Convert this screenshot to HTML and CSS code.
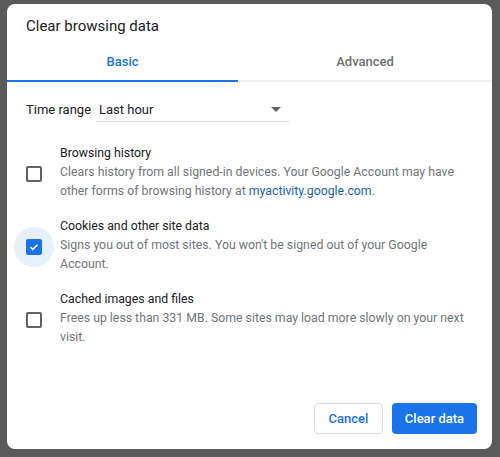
FILE: index.html
```html
<!DOCTYPE html>
<html>
<head>
    <title>Clear browsing data</title>
    <link rel="stylesheet" href="styles.css">
</head>
<body>
    <div class="dialog">
        <div class="title">Clear browsing data</div>

        <div class="tabs">
            <div class="tab active">Basic</div>
            <div class="tab">Advanced</div>
        </div>

        <div class="content">
            <div class="range-row">
                <span class="range-label">Time range</span>
                <div class="select">
                    <span>Last hour</span>
                    <svg class="arrow" width="10" height="5" viewBox="0 0 10 5"><path d="M0 0h10L5 5z" fill="#5f6368"/></svg>
                </div>
            </div>

            <div class="option">
                <div class="check"><span class="box"></span></div>
                <div class="text">
                    <div class="label">Browsing history</div>
                    <div class="desc">Clears history from all signed-in devices. Your Google Account may have other forms of browsing history at <a href="#">myactivity.google.com</a>.</div>
                </div>
            </div>

            <div class="option">
                <div class="check checked">
                    <span class="box">
                        <svg width="14" height="14" viewBox="0 0 14 14"><path d="M3 7.2l2.6 2.6L11 4.4" fill="none" stroke="#fff" stroke-width="1.8"/></svg>
                    </span>
                </div>
                <div class="text">
                    <div class="label">Cookies and other site data</div>
                    <div class="desc">Signs you out of most sites. You won't be signed out of your Google Account.</div>
                </div>
            </div>

            <div class="option">
                <div class="check"><span class="box"></span></div>
                <div class="text">
                    <div class="label">Cached images and files</div>
                    <div class="desc">Frees up less than 331 MB. Some sites may load more slowly on your next visit.</div>
                </div>
            </div>
        </div>

        <div class="footer">
            <button class="btn cancel">Cancel</button>
            <button class="btn primary">Clear data</button>
        </div>
    </div>
</body>
</html>
```

FILE: styles.css
```css
body {
    margin: 0;
    background: #5a5a5a;
    font-family: Roboto, "Liberation Sans", sans-serif;
    height: 457px;
    overflow: hidden;
}
.dialog {
    margin: 4px 8px 0 7px;
    height: 445px;
    background: #fff;
    border-radius: 8px;
    display: flex;
    flex-direction: column;
}
.title {
    padding: 13px 0 0 19px;
    height: 27px;
    font-size: 15px;
    color: #202124;
}
.tabs {
    display: flex;
    margin-top: 6px;
    border-bottom: 2px solid #eeeeee;
}
.tab {
    flex: 1;
    text-align: center;
    font-size: 13px;
    font-weight: 500;
    color: #6d6f73;
    height: 30px;
    line-height: 24px;
}
.tab.active {
    color: #1a73e8;
    border-bottom: 2px solid #1a73e8;
    margin-bottom: -2px;
    flex: 0 0 231px;
}
.content {
    flex: 1;
    padding: 0 0 0 19px;
}
.range-row {
    display: flex;
    align-items: center;
    margin-top: 15px;
    font-size: 13px;
    color: #202124;
}
.range-label {
    width: 70px;
}
.select {
    width: 182px;
    display: flex;
    justify-content: space-between;
    align-items: center;
    padding: 0 8px 0 3px;
    height: 24px;
    border-bottom: 1px solid #dadce0;
}
.option {
    display: flex;
    margin-top: 22px;
}
.option + .option {
    margin-top: 16px;
}
.check {
    width: 34px;
    display: flex;
    align-items: center;
}
.box {
    width: 12px;
    height: 12px;
    border: 2px solid #5f6368;
    border-radius: 2px;
    display: flex;
    align-items: center;
    justify-content: center;
    margin-top: 2px;
}
.checked {
    position: relative;
}
.checked::before {
    content: "";
    position: absolute;
    left: -12px;
    top: 50%;
    margin-top: -19px;
    width: 40px;
    height: 40px;
    border-radius: 50%;
    background: #e8f0fe;
}
.checked .box {
    position: relative;
    background: #1a73e8;
    border-color: #1a73e8;
}
.text {
    flex: 1;
    padding-right: 19px;
    font-size: 12.3px;
    line-height: 19px;
}
.label {
    color: #202124;
}
.desc {
    color: #70757a;
}
.desc a {
    color: #1a5fb4;
    text-decoration: none;
}
.footer {
    display: flex;
    justify-content: flex-end;
    gap: 9px;
    padding: 0 15px 15px 0;
}
.btn {
    height: 31px;
    border-radius: 4px;
    font-family: Roboto, "Liberation Sans", sans-serif;
    font-size: 13px;
    font-weight: 500;
    padding: 0;
    white-space: nowrap;
}
.cancel {
    background: #fff;
    border: 1px solid #dadce0;
    color: #1a73e8;
    width: 69px;
}
.primary {
    background: #1a73e8;
    border: none;
    color: #fff;
    width: 85px;
}
```
